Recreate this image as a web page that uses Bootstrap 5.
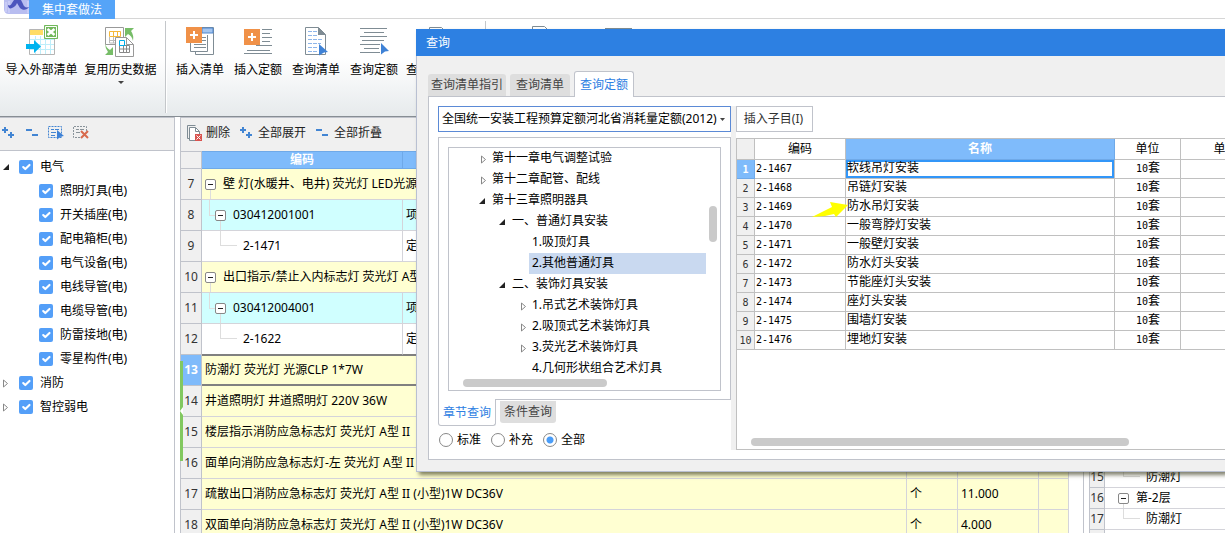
<!DOCTYPE html>
<html lang="zh-CN">
<head>
<meta charset="utf-8">
<meta name="viewport" content="width=device-width, initial-scale=1">
<title>集中套做法</title>
<link href="https://cdn.jsdelivr.net/npm/bootstrap@5.3.0/dist/css/bootstrap.min.css" rel="stylesheet">
<style>
:root{--line:#c0c3cb;--grid:#d4d4da;--blue:#7fbbfb;--panel:#f0f0f0}
body{font:12px/20px "Noto Sans","Noto Sans CJK SC",sans-serif;color:#000;background:#fff;height:100vh;overflow:hidden}
button{font:inherit}
svg{display:block;flex:none}
.titlebar{height:19px;border-bottom:1px solid #d6d6d6}
.app-logo{margin-left:4px;width:25px}
.app-tab{background:#55a4f8;color:#fff;width:86px;height:19px;line-height:19px;border:0;padding:0}
.ribbon{height:98px;background:linear-gradient(#fff 40%,#e6eaec);border-bottom:1px solid #878e94;overflow:hidden;padding-left:2px}
.tool{width:58px;border:0;background:none;padding:6px 0 0;flex:none;display:flex;flex-direction:column;align-items:center;gap:3px;white-space:nowrap}
.tool.wide{width:79px}
.tool.five{width:66px}
.tool svg{width:32px;height:32px}
.tool .caret-down{margin-top:-2px}
.caret-down{border:3px solid transparent;border-top-color:#444;border-bottom:0;width:0;height:0}
.divider{width:2px;height:92px;margin:2px 4px 0 5px;background:linear-gradient(90deg,#c4c7ca 50%,#fff 50%);flex:none}
.side{width:175px;flex:none;border-right:1px solid var(--line)}
.panel-bar{height:34px;background:var(--panel);border-top:1px solid var(--line);border-bottom:1px solid var(--line);padding-bottom:3px}
.side .panel-bar{gap:9px;padding-left:1px}
.panel-bar button{border:0;background:none;padding:0;color:#222;display:flex;align-items:center}
.side-tree{padding-top:4px}
.side-tree .node{height:24px;display:flex;align-items:center;gap:7px;padding-left:3px}
.side-tree .node.child{padding-left:39px}
.tw{width:9px;flex:none}
.side-tree label{display:flex;align-items:center;gap:7px}
.side-tree .form-check-input{margin:0;width:14px;height:14px;border:0;border-radius:2px;background-color:#549ff8}
.work{margin-left:5px;border-left:1px solid var(--line);min-width:0;position:relative}
.work .panel-bar{border-bottom:0;gap:10px;padding-left:6px}
.grid{table-layout:fixed;border-collapse:separate;border-spacing:0;width:calc(100% - 14px)}
.grid th,.grid td{padding:0 0 0 3px;border-right:1px solid var(--grid);border-bottom:1px solid var(--grid);white-space:nowrap;overflow:hidden;font-weight:400}
.grid td{height:31px}
.grid thead th{height:18px;line-height:16px;background:var(--blue);color:#fff;font-weight:700;border-color:#6fa9e8;border-top:1px solid #6fa9e8;text-align:center;padding:0}
.grid tr>th:first-child{background:var(--panel);color:#333;text-align:center;padding:0;border-color:var(--line)}
.grid .group td{background:#ffffd2}
.grid .item td{background:#d0ffff}
.grid .last td,.grid .last th{border-bottom-color:#808080}
.grid .current td{border-top:1px solid #808080;border-bottom:2px solid #808080}
.grid tr.current>th:first-child{background:var(--blue);color:#fff;font-weight:700}
.rownode{display:flex;align-items:center}
.toggle{width:11px;height:11px;flex:none;padding:0;border:1px solid #888;border-radius:2px;background:#fff;position:relative;margin-right:7px}
.toggle i{position:absolute;left:2px;top:4px;width:5px;height:1px;background:#222}
.toggle::after{content:"";position:absolute;left:4px;top:10px;height:12px;border-left:1px solid #ddd}
.lv2{padding-left:10px}
.lv2 .toggle::before{content:"";position:absolute;left:-7px;top:-12px;width:6px;height:17px;border:solid #ddd;border-width:0 0 1px 1px}
.lv3{padding-left:38px;position:relative}
.lv3::before{content:"";position:absolute;left:15px;top:-6px;width:17px;height:16px;border:solid #ddd;border-width:0 0 1px 1px}
.strip{position:absolute;left:-1px;top:244px;width:3px;height:100px;background:#82c860}
.right-pane{width:142px;flex:none;border-left:1px solid var(--line);padding:350px 0 0 5px}
.mini{width:100%;margin:0;border-left:1px solid var(--line)}
.mini td{height:21px;line-height:20px;padding-left:13px;border-right:0}
.mini td .lv3{padding-left:28px}
.mini td .lv3::before{left:5px;top:-2px;height:12px}
.mini td .toggle::after{height:6px}
.query{position:absolute;z-index:5;left:416px;right:0;top:29px;background:var(--panel);border:solid #b9c0d2;border-width:0 0 1px 1px;padding-bottom:11px;box-shadow:3px 3px 4px rgba(60,60,30,.65)}
.query h1{font-size:12px;line-height:27px;background:#2d80e2;color:#fff;margin:0 0 0 -1px;padding-left:10px;font-weight:400}
.qtabs{padding:14px 0 0 11px;gap:4px;height:40px}
.qtabs button{border:0;background:#dedede;color:#444;border-radius:3px 3px 0 0;height:22px;padding:0 3px}
.qtabs button:nth-child(2){padding:0 6px}
.qtabs button.on{background:#fff;color:#2d80e2;border:1px solid var(--line);border-bottom:0;height:26px;padding:0 5px;z-index:1;margin-bottom:-1px}
.qbody{background:#fff;margin-left:11px;border:solid var(--line);border-width:1px 0 1px 1px;padding:9px 0 9px 9px}
.qleft{width:293px;flex:none}
.book{appearance:none;width:100%;height:26px;border:1px solid #5b8ad6;padding:0 10px 0 3px;color:#000;background:#fff url("data:image/svg+xml,%3Csvg xmlns='http://www.w3.org/2000/svg' width='5' height='3'%3E%3Cpath d='M0 0h5L2.500 3z' fill='%23444'/%3E%3C/svg%3E") no-repeat right 5px center;display:block;margin-bottom:5px}
.box{border:1px solid var(--line);padding:9px;height:263px}
.chapters{border:1px solid var(--line);height:244px;position:relative;overflow:hidden}
.chapters .node{height:21px;line-height:18px;padding-bottom:2px;display:flex;align-items:center;white-space:nowrap}
.chapters .tw{margin-right:5px}
.chapters .tw svg{margin-top:3px}
.n1{padding-left:29px}.n2{padding-left:49px}.n3{padding-left:69px}
.chapters .sel{margin-left:80px;padding-left:3px;margin-right:14px;background:#c9d9f0}
.chapters .leafnode{padding-left:83px}
.thumb-bar{background:#cacaca;border-radius:4px;position:absolute}
.btabs{gap:4px;margin-top:-1px;position:relative}
.btabs button{border:0;background:#dedede;color:#444;height:22px;padding:0 4px;border-radius:0 0 3px 3px;margin-top:2px}
.btabs button.on{background:#fff;color:#2d80e2;border:1px solid var(--line);border-top:0;height:27px;margin:0;padding:2px 4px 0}
.scope{gap:10px;padding:4px 0 0 1px}
.scope label{display:flex;align-items:center;gap:4px;width:42px;white-space:nowrap}
.scope input{appearance:none;width:14px;height:14px;border:1px solid #888;border-radius:50%;margin:0;background:#fff;flex:none}
.scope input:checked{background:radial-gradient(circle,#4a9df8 0 3px,#fff 4px)}
.split{width:5px;background:var(--panel);flex:none}
.insert{height:26px;width:77px;border:1px solid var(--line);background:#fff;color:#333;padding:0 2px 0 0;margin-bottom:6px;display:block}
.result{height:312px;border:solid #c0c0c0;border-width:1px 0 1px 1px;position:relative;overflow:hidden}
.quota{table-layout:fixed;border-collapse:separate;border-spacing:0;width:534px;font-family:"DejaVu Sans Mono","Noto Sans CJK SC",sans-serif;font-size:10px;line-height:14px}
.quota th,.quota td{padding:0 0 1px 1px;height:19px;border-right:1px solid #c0c0c0;border-bottom:1px solid #c0c0c0;font-weight:400;white-space:nowrap;overflow:hidden}
.quota span,.quota thead th{font-size:12px}
.quota thead th{height:21px;text-align:center;padding:0}
.quota tr>th:first-child{background:var(--panel);color:#333;text-align:center;padding:2px 0 0}
.quota td:nth-child(4){text-align:center}
.quota .pick,.quota tr.active>th:first-child{background:var(--blue);color:#fff;font-weight:700;border-color:#6fa9e8}
.quota .active td:nth-child(3){box-shadow:inset 0 0 0 2px #3296f8}
.pointer{position:absolute;left:74px;top:62px}
</style>
</head>
<body class="d-flex flex-column">
<header class="titlebar d-flex flex-shrink-0">
  <div class="app-logo"><svg width="29" height="15" viewBox="0 0 29 15"><path d="M0 0h28v9q0 5-5 5H5q-5 0-5-5z" fill="#b8bdf0"/><path d="M2 2v10M5 1v12M24 1v12" stroke="#cdd0f8" stroke-width="1.500"/><path d="M4 5c2 1 3 0 4-2l2-3h7l2 4c1 3 3 4 6 3-2 3-6 4-9 1l-3-5c-1 3-3 4-5 5-2 1-4 0-4-3z" fill="#4c55bd"/></svg></div>
  <button class="app-tab">集中套做法</button>
</header>
<nav class="ribbon d-flex flex-shrink-0">
  <button class="tool wide"><svg viewBox="0 0 32 32" fill="none"><path d="M3.500 4.500h25v25h-25z" fill="#fff" stroke="#b5b5b5"/><path d="M4 5h13v5H4z" fill="#ffdc66"/><path d="M9.500 11v18M14.500 11v18M19.500 14v15M24.500 14v15M4 14.500h24M4 19.500h24M4 24.500h24" stroke="#bdeefa"/><path d="M0 19h8v-4l7 6.500L8 28v-4H0z" fill="#00b3ef"/><path d="M18.500.5h13v13h-13z" fill="#72b85c" stroke="#72b85c"/><path d="M19.500 1.500h11v11h-11z" stroke="#fff"/><path d="m21.500 4 7 6m0-6-7 6" stroke="#fff" stroke-width="2.500"/></svg><span>导入外部清单</span></button>
  <button class="tool wide"><svg viewBox="0 0 32 32" fill="none"><path d="M.5 2.500h18v17H.5z" fill="#fff" stroke="#999"/><path d="M4.500 6.500h11v5h-11zM8.500 6.500v5M12.500 6.500v5" stroke="#f5b83a"/><path d="M4.500 12v6h6M8.500 12v6M4.500 15.500h6" stroke="#bbb"/><path d="M10.500 12.500h11l7 7v12h-18z" fill="#fff" stroke="#999"/><path d="M21.500 12.500v7h7" stroke="#999"/><path d="M14.500 20.500h10v7h-10zM18.500 20v7M21.500 20v7M14.500 24h10" stroke="#888"/><path d="M14.500 15.500h5v5h-5z" stroke="#00aeea"/><path d="M20 3h9l-3 3q3 4 2 10-1-5-5-7l-3 3zM0 18q1 5 5 7l3-3v8H0l3-3q-3-4-3-9z" fill="#77bd68"/></svg><span>复用历史数据</span><i class="caret-down"></i></button>
  <div class="divider"></div>
  <button class="tool"><svg viewBox="0 0 32 32" fill="none"><path d="M16 2.500h13.500v27h-18v-3" fill="#fff" stroke="#7f8c94"/><path d="M18 3h11v5H18z" fill="#a4c5ef" stroke="#4e86cd"/><path d="M6.500 18v8.500h17V10M18 12.500h4M18 15.500h4M10 19.500h12M10 22.500h12" stroke="#7f8c94"/><path d="M2 2h16v16H2z" fill="#f09148"/><path d="M10 6v8M6 10h8" stroke="#fff" stroke-width="2"/></svg><span>插入清单</span></button>
  <button class="tool"><svg viewBox="0 0 32 32"><path d="M20 4.500h10M20 8.500h8M20 12.500h10M20 16.500h8M14 20.500h16M5 25.500h23M2 28.500h28" stroke="#7f8c94"/><path d="M2 4h16v16H2z" fill="#f09148"/><path d="M10 8v8M6 12h8" stroke="#fff" stroke-width="2"/></svg><span>插入定额</span></button>
  <button class="tool"><svg viewBox="0 0 32 32"><path d="M5.500 2.500h13l7 7v20h-20z" fill="#fff" stroke="#7f8c94"/><path d="M18 2v8h8z" fill="#7f8c94"/><path d="M8 6.500h9M8 10.500h9M8 14.500h15M8 18.500h13M8 22.500h10M8 26.500h10" stroke="#8eb6ea" stroke-dasharray="4 1"/><path d="m19 19 9 8-4 .5-5 3z" fill="#3f82d6"/></svg><span>查询清单</span></button>
  <button class="tool"><svg viewBox="0 0 32 32"><path d="M2 3.500h27M6 7.500h20M2 11.500h27M4 15.500h22M2 19.500h20M6 23.500h15M2 27.500h20" stroke="#7f8c94"/><path d="m23 18 8 8-4 .5-4 3z" fill="#3f82d6"/></svg><span>查询定额</span></button>
  <button class="tool five"><svg viewBox="0 0 32 32"><path d="M9.500 2.500h12l5 5v20h-17z" fill="#fff" stroke="#7f8c94"/></svg><span>查询人材机</span></button>
  <div class="divider ms-3"></div>
  <button class="tool wide ms-2" aria-label="文档"><svg viewBox="0 0 32 32"><path d="M9.500 1.500h12l5 5v20h-17z" fill="#fff" stroke="#7f8c94"/></svg></button>
  <button class="tool wide" aria-label="列表"><svg viewBox="0 0 32 32"><path d="M3 3.500h27M6 8.500h20" stroke="#7f8c94"/></svg></button>
</nav>
<main class="d-flex flex-grow-1 overflow-hidden">
  <aside class="side">
    <div class="panel-bar d-flex align-items-center">
      <button aria-label="全部展开"><svg width="15" height="16" viewBox="0 0 15 16"><path d="M1 5h6M4 2v6M7 10h6M10 7v6" stroke="#4285d3" stroke-width="2"/></svg></button>
      <button aria-label="全部折叠"><svg width="14" height="16" viewBox="0 0 14 16"><path d="M1 5h6M7 10h6" stroke="#4285d3" stroke-width="2"/></svg></button>
      <button aria-label="选择"><svg width="16" height="16" viewBox="0 0 16 16" fill="none"><path d="M.5 1.500h13v11H.5z" stroke="#4285d3" stroke-dasharray="2 1"/><path d="M3 4.500h3M7 4.500h4M3 7.500h5M3 10.500h4" stroke="#4285d3"/><path d="m9 5 7 6-3 .5-4 3z" fill="#3f82d6"/></svg></button>
      <button aria-label="取消选择"><svg width="16" height="16" viewBox="0 0 16 16" fill="none"><path d="M7 12.500H.5v-11h13V6" stroke="#89939a" stroke-dasharray="2 1"/><path d="M3 4.500h3M7 4.500h4M3 7.500h4" stroke="#89939a"/><path d="m8 6 7 7m0-7-7 7" stroke="#d86a4d" stroke-width="2"/></svg></button>
    </div>
    <div class="side-tree">
      <div class="node"><span class="tw"><svg width="7" height="7"><path d="M6 0v6H0z" fill="#222"/></svg></span><label><input type="checkbox" class="form-check-input" checked>电气</label></div>
      <div class="node child"><label><input type="checkbox" class="form-check-input" checked>照明灯具(电)</label></div>
      <div class="node child"><label><input type="checkbox" class="form-check-input" checked>开关插座(电)</label></div>
      <div class="node child"><label><input type="checkbox" class="form-check-input" checked>配电箱柜(电)</label></div>
      <div class="node child"><label><input type="checkbox" class="form-check-input" checked>电气设备(电)</label></div>
      <div class="node child"><label><input type="checkbox" class="form-check-input" checked>电线导管(电)</label></div>
      <div class="node child"><label><input type="checkbox" class="form-check-input" checked>电缆导管(电)</label></div>
      <div class="node child"><label><input type="checkbox" class="form-check-input" checked>防雷接地(电)</label></div>
      <div class="node child"><label><input type="checkbox" class="form-check-input" checked>零星构件(电)</label></div>
      <div class="node"><span class="tw"><svg width="6" height="9"><path d="M.5 1v7l4-3.500z" fill="#fff" stroke="#888"/></svg></span><label><input type="checkbox" class="form-check-input" checked>消防</label></div>
      <div class="node"><span class="tw"><svg width="6" height="9"><path d="M.5 1v7l4-3.500z" fill="#fff" stroke="#888"/></svg></span><label><input type="checkbox" class="form-check-input" checked>智控弱电</label></div>
    </div>
  </aside>
  <section class="work flex-grow-1">
    <div class="panel-bar d-flex align-items-center">
      <button class="gap-1"><svg width="15" height="16" viewBox="0 0 15 16" fill="none"><path d="M2.500 13.500h-2V.5h8" stroke="#7f8c94"/><path d="M8 15.500H2.500v-13h6l4 4V9" fill="#fff" stroke="#7f8c94"/><path d="M8.500 2.500v4h4" stroke="#7f8c94"/><path d="M8 9h7v7H8z" fill="#d9534f"/><path d="m9.500 10.500 4 4m0-4-4 4" stroke="#fff"/></svg>删除</button>
      <button class="gap-1"><svg width="14" height="16" viewBox="0 0 14 16"><path d="M0 5h6M3 2v6M6 10h6M9 7v6" stroke="#4285d3" stroke-width="2"/></svg>全部展开</button>
      <button class="gap-1"><svg width="14" height="16" viewBox="0 0 14 16"><path d="M0 5h6M6 10h6" stroke="#4285d3" stroke-width="2"/></svg>全部折叠</button>
    </div>
    <table class="grid">
      <colgroup><col style="width:21px"><col style="width:201px"><col><col style="width:51px"><col style="width:81px"><col style="width:30px"></colgroup>
      <thead><tr><th></th><th>编码</th><th>名称</th><th></th><th></th><th></th></tr></thead>
      <tbody>
      <tr class="group"><th>7</th><td colspan="2"><div class="rownode"><button class="toggle" aria-label="折叠"><i></i></button>壁 灯(水暖井、电井) 荧光灯 LED光源</div></td><td></td><td></td><td></td></tr>
      <tr class="item"><th>8</th><td><div class="rownode lv2"><button class="toggle" aria-label="折叠"><i></i></button>030412001001</div></td><td>项</td><td></td><td></td><td></td></tr>
      <tr><th>9</th><td><div class="lv3">2-1471</div></td><td>定</td><td></td><td></td><td></td></tr>
      <tr class="group"><th>10</th><td colspan="2"><div class="rownode"><button class="toggle" aria-label="折叠"><i></i></button>出口指示/禁止入内标志灯 荧光灯 A型</div></td><td></td><td></td><td></td></tr>
      <tr class="item"><th>11</th><td><div class="rownode lv2"><button class="toggle" aria-label="折叠"><i></i></button>030412004001</div></td><td>项</td><td></td><td></td><td></td></tr>
      <tr class="last"><th>12</th><td><div class="lv3">2-1622</div></td><td>定</td><td></td><td></td><td></td></tr>
      <tr class="group current"><th>13</th><td colspan="2">防潮灯 荧光灯 光源CLP 1*7W</td><td></td><td></td><td></td></tr>
      <tr class="group"><th>14</th><td colspan="2">井道照明灯 井道照明灯 220V 36W</td><td></td><td></td><td></td></tr>
      <tr class="group"><th>15</th><td colspan="2">楼层指示消防应急标志灯 荧光灯 A型 II</td><td></td><td></td><td></td></tr>
      <tr class="group"><th>16</th><td colspan="2">面单向消防应急标志灯-左 荧光灯 A型 II</td><td></td><td></td><td></td></tr>
      <tr class="group"><th>17</th><td colspan="2">疏散出口消防应急标志灯 荧光灯 A型 II (小型)1W DC36V</td><td>个</td><td>11.000</td><td></td></tr>
      <tr class="group"><th>18</th><td colspan="2">双面单向消防应急标志灯 荧光灯 A型 II (小型)1W DC36V</td><td>个</td><td>4.000</td><td></td></tr>
      </tbody>
    </table>
    <div class="strip"><svg width="3" height="100"><path d="M3 46v8l-3-4z" fill="#fff"/></svg></div>
  </section>
  <aside class="right-pane">
    <table class="grid mini">
      <colgroup><col style="width:15px"><col></colgroup>
      <tbody>
      <tr><th>15</th><td><div class="lv3">防潮灯</div></td></tr>
      <tr><th>16</th><td><div class="rownode"><button class="toggle" aria-label="折叠"><i></i></button>第-2层</div></td></tr>
      <tr><th>17</th><td><div class="lv3">防潮灯</div></td></tr>
      <tr><th></th><td></td></tr>
      </tbody>
    </table>
  </aside>
</main>

<section class="query" role="dialog" aria-labelledby="qtitle">
  <h1 id="qtitle">查询</h1>
  <div class="qtabs d-flex align-items-end">
    <button>查询清单指引</button><button>查询清单</button><button class="on">查询定额</button>
  </div>
  <div class="qbody d-flex">
    <div class="qleft">
      <select class="book" aria-label="定额库"><option>全国统一安装工程预算定额河北省消耗量定额(2012)</option></select>
      <div class="box">
        <div class="chapters">
          <div class="node n1"><span class="tw"><svg width="9" height="9"><path d="M3.500 1v7l4-3.500z" fill="#fff" stroke="#888"/></svg></span>第十一章电气调整试验</div>
          <div class="node n1"><span class="tw"><svg width="9" height="9"><path d="M3.500 1v7l4-3.500z" fill="#fff" stroke="#888"/></svg></span>第十二章配管、配线</div>
          <div class="node n1"><span class="tw"><svg width="8" height="7"><path d="M7 0v6H1z" fill="#222"/></svg></span>第十三章照明器具</div>
          <div class="node n2"><span class="tw"><svg width="8" height="7"><path d="M7 0v6H1z" fill="#222"/></svg></span>一、普通灯具安装</div>
          <div class="node leafnode">1.吸顶灯具</div>
          <div class="node sel">2.其他普通灯具</div>
          <div class="node n2"><span class="tw"><svg width="8" height="7"><path d="M7 0v6H1z" fill="#222"/></svg></span>二、装饰灯具安装</div>
          <div class="node n3"><span class="tw"><svg width="9" height="9"><path d="M3.500 1v7l4-3.500z" fill="#fff" stroke="#888"/></svg></span>1.吊式艺术装饰灯具</div>
          <div class="node n3"><span class="tw"><svg width="9" height="9"><path d="M3.500 1v7l4-3.500z" fill="#fff" stroke="#888"/></svg></span>2.吸顶式艺术装饰灯具</div>
          <div class="node n3"><span class="tw"><svg width="9" height="9"><path d="M3.500 1v7l4-3.500z" fill="#fff" stroke="#888"/></svg></span>3.荧光艺术装饰灯具</div>
          <div class="node leafnode">4.几何形状组合艺术灯具</div>
          <div class="thumb-bar" style="right:3px;top:58px;width:8px;height:36px"></div>
          <div class="thumb-bar" style="left:14px;bottom:3px;width:144px;height:8px"></div>
        </div>
      </div>
      <div class="btabs d-flex align-items-start"><button class="on">章节查询</button><button>条件查询</button></div>
      <div class="scope d-flex">
        <label><input type="radio" name="scope">标准</label><label><input type="radio" name="scope">补充</label><label><input type="radio" name="scope" checked>全部</label>
      </div>
    </div>
    <div class="split"></div>
    <div class="flex-grow-1 overflow-hidden">
      <button class="insert">插入子目(I)</button>
      <div class="result">
        <table class="quota">
          <colgroup><col style="width:18px"><col style="width:91px"><col style="width:269px"><col style="width:66px"><col style="width:90px"></colgroup>
          <thead><tr><th></th><th>编码</th><th class="pick">名称</th><th>单位</th><th>单价</th></tr></thead>
          <tbody>
          <tr class="active"><th>1</th><td>2-1467</td><td><span>软线吊灯安装</span></td><td>10<span>套</span></td><td></td></tr>
          <tr><th>2</th><td>2-1468</td><td><span>吊链灯安装</span></td><td>10<span>套</span></td><td></td></tr>
          <tr><th>3</th><td>2-1469</td><td><span>防水吊灯安装</span></td><td>10<span>套</span></td><td></td></tr>
          <tr><th>4</th><td>2-1470</td><td><span>一般弯脖灯安装</span></td><td>10<span>套</span></td><td></td></tr>
          <tr><th>5</th><td>2-1471</td><td><span>一般壁灯安装</span></td><td>10<span>套</span></td><td></td></tr>
          <tr><th>6</th><td>2-1472</td><td><span>防水灯头安装</span></td><td>10<span>套</span></td><td></td></tr>
          <tr><th>7</th><td>2-1473</td><td><span>节能座灯头安装</span></td><td>10<span>套</span></td><td></td></tr>
          <tr><th>8</th><td>2-1474</td><td><span>座灯头安装</span></td><td>10<span>套</span></td><td></td></tr>
          <tr><th>9</th><td>2-1475</td><td><span>围墙灯安装</span></td><td>10<span>套</span></td><td></td></tr>
          <tr><th>10</th><td>2-1476</td><td><span>埋地灯安装</span></td><td>10<span>套</span></td><td></td></tr>
          </tbody>
        </table>
        <svg class="pointer" width="38" height="18"><path d="m1 16 20-10-2-5 18 3-12 12-2-3-9 2z" fill="#ff0"/></svg>
        <div class="thumb-bar" style="left:14px;right:96px;bottom:3px;height:8px"></div>
      </div>
    </div>
  </div>
</section>
<script src="https://cdn.jsdelivr.net/npm/bootstrap@5.3.0/dist/js/bootstrap.bundle.min.js"></script>
</body>
</html>
